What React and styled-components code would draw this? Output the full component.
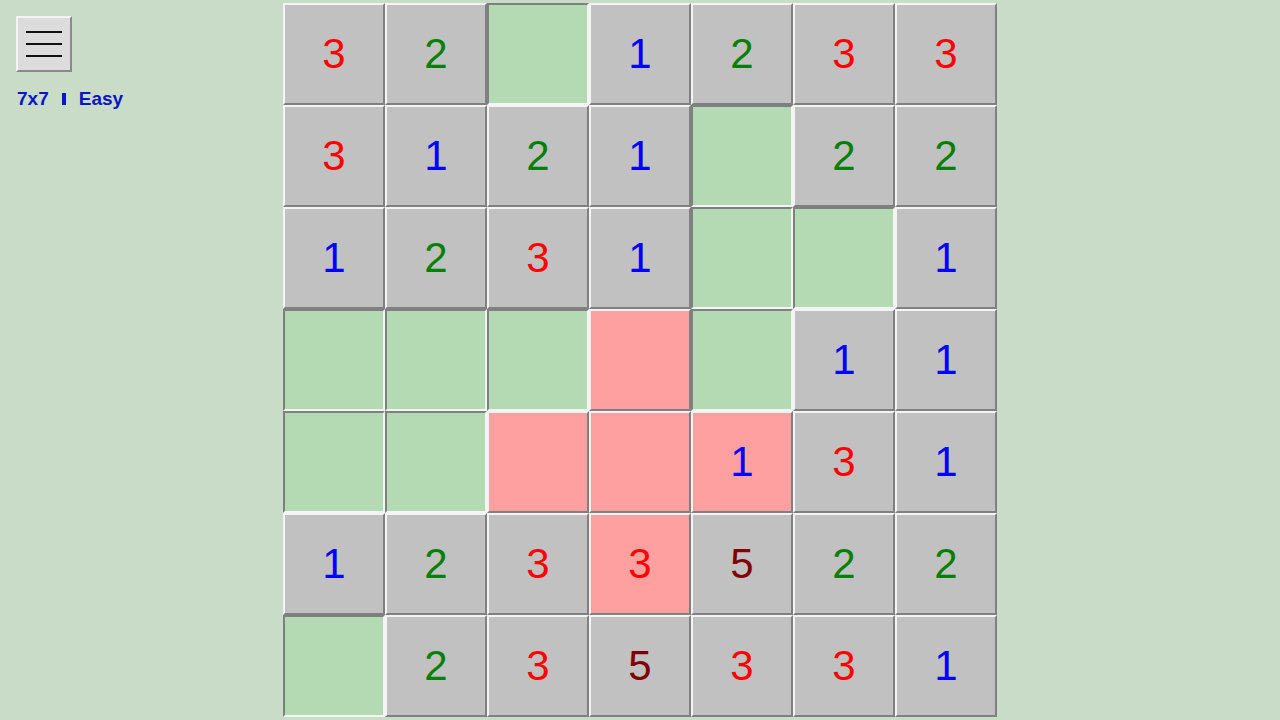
import styled, { createGlobalStyle } from "styled-components";

const GlobalStyle = createGlobalStyle`
  html, body {
    margin: 0;
    padding: 0;
    background: #c9dcc7;
    font-family: "Liberation Sans", Arial, sans-serif;
  }
`;

// g = green (open), r = red, numbers = gray cells with a clue
const board = [
  [3, 2, "g", 1, 2, 3, 3],
  [3, 1, 2, 1, "g", 2, 2],
  [1, 2, 3, 1, "g", "g", 1],
  ["g", "g", "g", "r", "g", 1, 1],
  ["g", "g", "r", "r", "r1", 3, 1],
  [1, 2, 3, "r3", 5, 2, 2],
  ["g", 2, 3, 5, 3, 3, 1],
];

const numColors = {
  1: "#0000ff",
  2: "#008000",
  3: "#ff0000",
  4: "#000080",
  5: "#800000",
};

const parseCell = (c) => {
  if (c === "g") return { kind: "green", num: null };
  if (typeof c === "string" && c[0] === "r")
    return { kind: "red", num: c.length > 1 ? Number(c.slice(1)) : null };
  return { kind: "gray", num: c };
};

export default function App() {
  return (
    <>
      <GlobalStyle />
      <Page>
        <Sidebar>
          <MenuButton aria-label="menu">
            <Line />
            <Line />
            <Line />
          </MenuButton>
          <Info>
            7x7 <Sep /> Easy
          </Info>
        </Sidebar>
        <Board>
          {board.flat().map((c, i) => {
            const { kind, num } = parseCell(c);
            return (
              <Cell key={i} $kind={kind} $color={numColors[num]}>
                {num}
              </Cell>
            );
          })}
        </Board>
      </Page>
    </>
  );
}

const Page = styled.div`
  display: grid;
  grid-template-columns: 1fr 714px 1fr;
  width: 1280px;
  height: 720px;
  overflow: hidden;
`;

const Sidebar = styled.div`
  display: flex;
  flex-direction: column;
  align-items: flex-start;
  padding: 16px 0 0 16px;
`;

const MenuButton = styled.div`
  box-sizing: border-box;
  width: 56px;
  height: 56px;
  background: #dcdcdc;
  border: 2px solid;
  border-color: #f4f4f4 #8a8a8a #8a8a8a #f4f4f4;
  display: flex;
  flex-direction: column;
  align-items: center;
  justify-content: center;
  gap: 10px;
`;

const Line = styled.div`
  width: 36px;
  height: 2px;
  background: #111;
`;

const Info = styled.div`
  margin-top: 16px;
  margin-left: 1px;
  color: #0b14c8;
  font-weight: bold;
  font-size: 19px;
  display: flex;
  align-items: center;
  gap: 13px;
`;

const Sep = styled.span`
  display: inline-block;
  width: 4px;
  height: 12px;
  background: #0b14c8;
`;

const Board = styled.div`
  display: grid;
  grid-template-columns: repeat(7, 102px);
  grid-auto-rows: 102px;
  padding-top: 3px;
`;

const fills = {
  gray: "#c1c1c1",
  green: "#b3dab2",
  red: "#ffa0a0",
};

const Cell = styled.div`
  box-sizing: border-box;
  background: ${(p) => fills[p.$kind]};
  border: 2px solid;
  border-color: ${(p) =>
    p.$kind === "green"
      ? "#808080 #f4f4f4 #f4f4f4 #808080"
      : "#f4f4f4 #808080 #808080 #f4f4f4"};
  display: flex;
  align-items: center;
  justify-content: center;
  color: ${(p) => p.$color || "#000"};
  font-family: "Liberation Sans", Arial, sans-serif;
  font-size: 42px;
  line-height: 1;
`;
